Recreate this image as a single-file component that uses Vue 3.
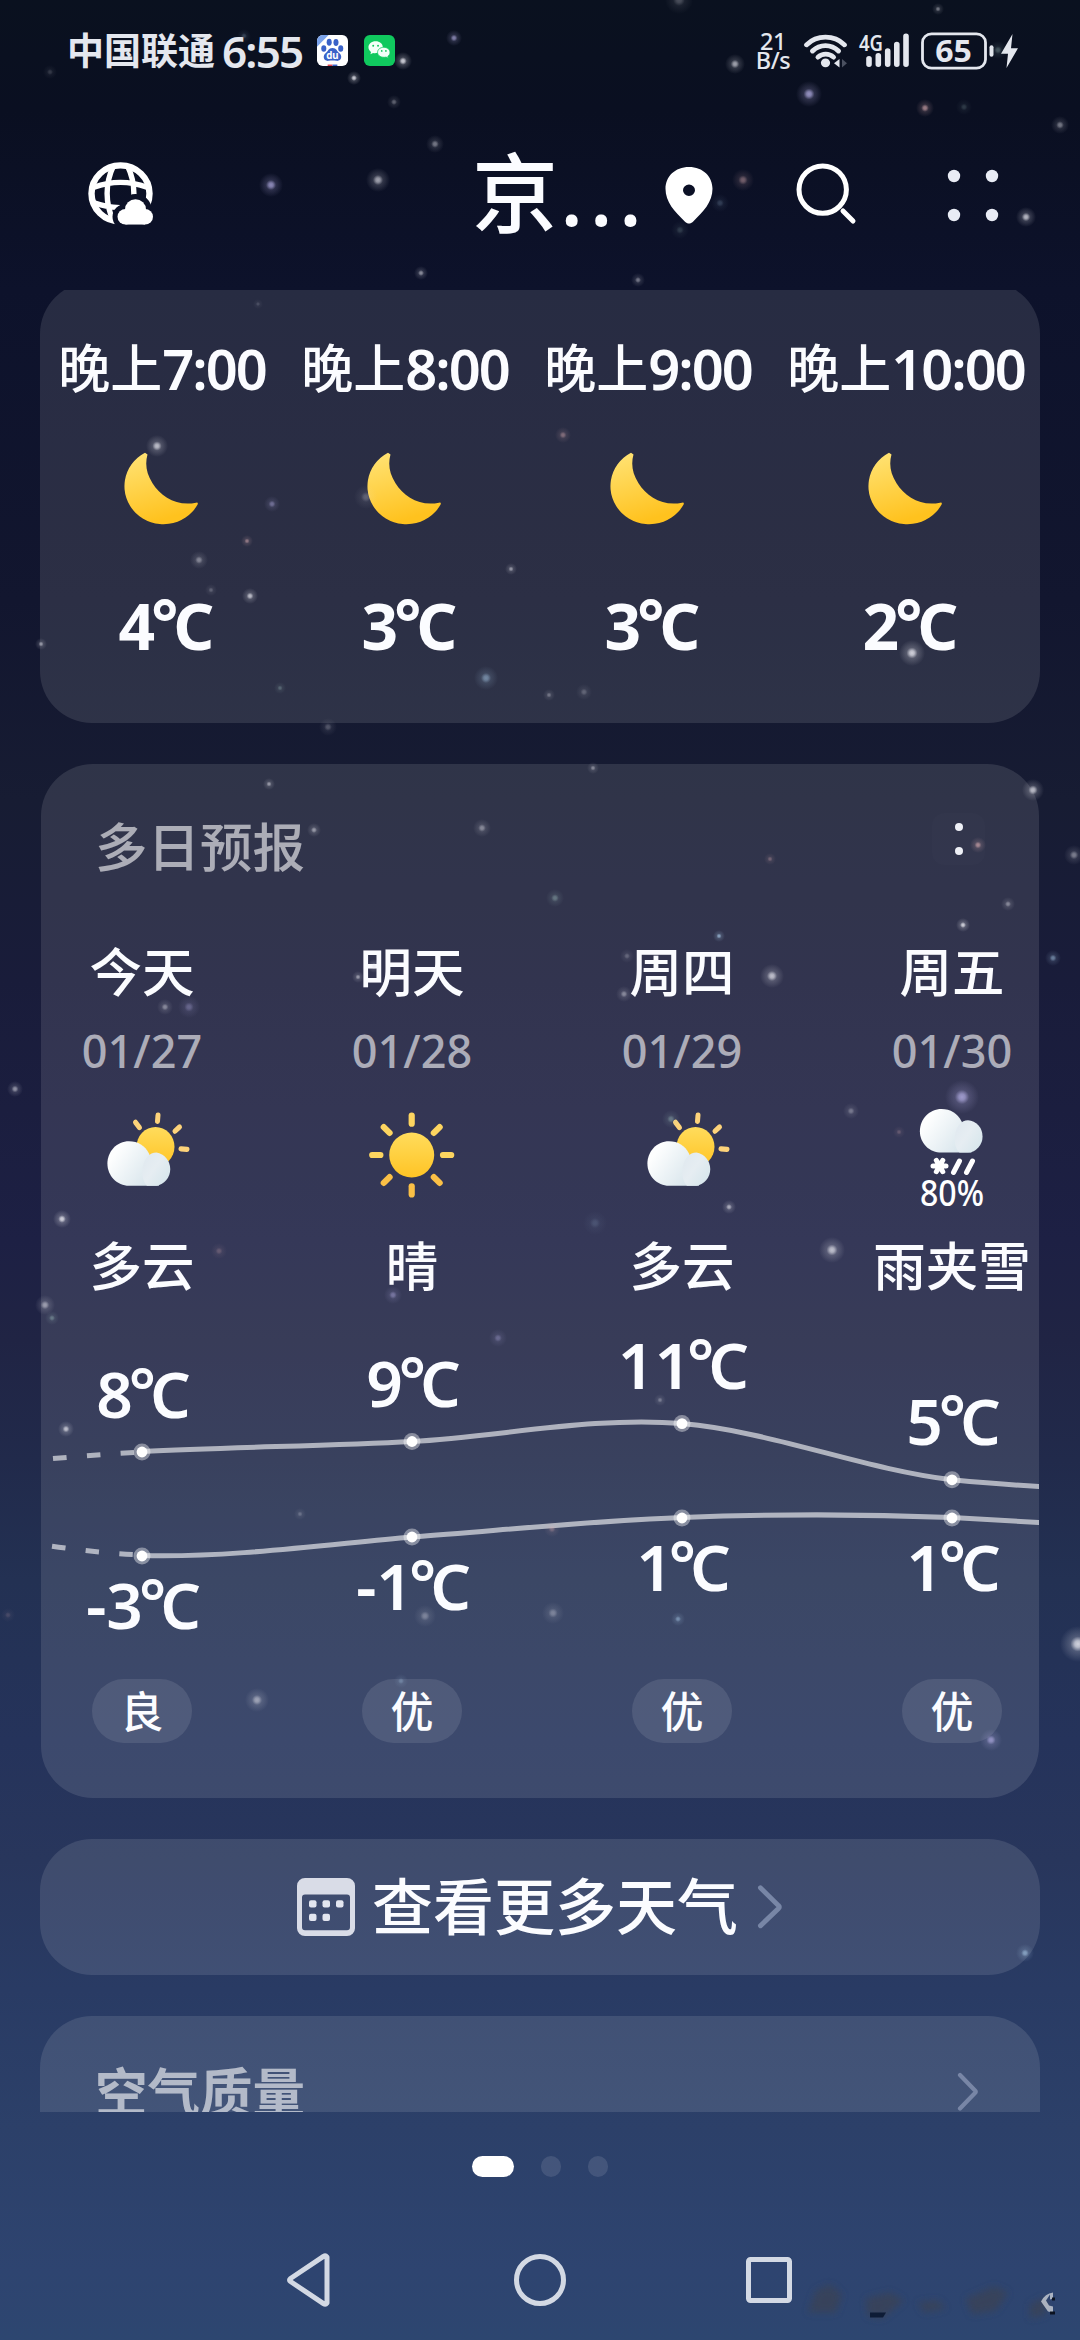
<script setup>
const hours = [
  { t: '7:00', v: '4' },
  { t: '8:00', v: '3' },
  { t: '9:00', v: '3' },
  { t: '10:00', v: '2' },
]

const days = [
  { name: '今天', date: '01/27', icon: 'partly', cond: '多云', air: '良', x: 142, hi: '8', hiY: 1452, lo: '-3', loY: 1556 },
  { name: '明天', date: '01/28', icon: 'sun', cond: '晴', air: '优', x: 412, hi: '9', hiY: 1441.5, lo: '-1', loY: 1537 },
  { name: '周四', date: '01/29', icon: 'partly', cond: '多云', air: '优', x: 682, hi: '11', hiY: 1423.6, lo: '1', loY: 1518 },
  { name: '周五', date: '01/30', icon: 'sleet', cond: '雨夹雪', air: '优', x: 952, hi: '5', hiY: 1479.8, lo: '1', loY: 1518 },
]

const rays = [0, 45, 90, 135, 180, 225, 270, 315]

// x, y, opacity, glow radius, tint
const stars = [
  [244, 36, 0.3, 7, 'b'], [50, 72, 0.2, 7, 'w'], [454, 38, 0.7, 8, 'p'], [403, 61, 0.9, 9, 'w'], [354, 78, 0.9, 7, 'w'],
  [394, 102, 0.4, 7, 'w'], [435, 144, 0.5, 9, 'w'], [271, 185, 0.75, 12, 'p'], [378, 180, 0.7, 12, 'w'], [421, 273, 0.6, 7, 'w'],
  [679, 0, 0.3, 14, 'w'], [938, 9, 0.5, 6, 'w'], [735, 64, 0.7, 10, 'w'], [809, 94, 0.8, 13, 'p'], [925, 108, 0.7, 9, 'r'],
  [964, 107, 0.25, 8, 'g'], [1060, 125, 0.5, 9, 'w'], [743, 180, 0.5, 11, 'r'], [720, 203, 0.25, 9, 'b'], [680, 230, 0.25, 9, 'g'],
  [1026, 217, 0.8, 10, 'w'], [638, 280, 0.5, 7, 'w'], [998, 50, 0.4, 9, 'g'], [258, 304, 0.2, 5, 'w'], [157, 446, 0.8, 11, 'w'],
  [272, 504, 0.5, 8, 'p'], [247, 541, 0.6, 6, 'r'], [199, 560, 0.5, 9, 'w'], [211, 590, 0.3, 6, 'w'], [250, 596, 0.8, 8, 'w'],
  [366, 497, 0.3, 12, 'w'], [511, 569, 0.6, 6, 'w'], [41, 644, 0.6, 6, 'w'], [280, 688, 0.4, 6, 'g'], [486, 678, 0.6, 12, 'b'],
  [328, 727, 0.3, 9, 'w'], [563, 435, 0.5, 8, 'r'], [549, 695, 0.4, 6, 'w'], [584, 692, 0.3, 8, 'w'], [912, 653, 0.9, 13, 'w'],
  [269, 784, 0.6, 6, 'w'], [314, 830, 0.6, 7, 'w'], [482, 828, 0.5, 9, 'w'], [165, 1007, 0.5, 8, 'w'], [189, 1007, 0.4, 11, 'p'],
  [358, 977, 0.6, 6, 'w'], [374, 966, 0.6, 7, 'w'], [15, 1089, 0.6, 8, 'w'], [62, 1219, 0.9, 9, 'w'], [219, 1251, 0.3, 8, 'r'],
  [393, 1295, 0.5, 9, 'p'], [593, 768, 0.5, 6, 'w'], [1033, 790, 0.8, 11, 'w'], [978, 845, 0.7, 8, 'r'], [1074, 855, 0.5, 10, 'w'],
  [770, 859, 0.4, 6, 'r'], [555, 898, 0.5, 9, 'g'], [1008, 904, 0.5, 7, 'w'], [963, 925, 0.9, 7, 'w'], [719, 936, 0.8, 6, 'b'],
  [1053, 958, 0.6, 8, 'b'], [627, 956, 0.3, 7, 'w'], [624, 994, 0.5, 8, 'w'], [772, 976, 0.8, 12, 'w'], [962, 1097, 0.8, 17, 'p'],
  [671, 1119, 0.5, 9, 'g'], [851, 1111, 0.4, 8, 'w'], [899, 1132, 0.3, 6, 'r'], [729, 1207, 0.7, 7, 'w'], [595, 1223, 0.2, 12, 'b'],
  [832, 1250, 0.8, 13, 'w'], [45, 1305, 0.6, 10, 'w'], [52, 1318, 0.5, 7, 'g'], [498, 1338, 0.4, 9, 'p'], [66, 1429, 0.8, 8, 'w'],
  [300, 1514, 0.3, 6, 'w'], [8, 1615, 0.2, 7, 'r'], [425, 1616, 0.4, 11, 'w'], [257, 1700, 0.6, 12, 'w'], [401, 1681, 0.4, 7, 'b'],
  [660, 1400, 0.4, 6, 'w'], [552, 1529, 0.4, 8, 'r'], [553, 1613, 0.4, 11, 'w'], [678, 1619, 0.6, 7, 'b'], [1078, 1644, 0.9, 18, 'w'],
  [991, 1740, 0.7, 11, 'p'], [1025, 1953, 0.7, 9, 'b'],
]
const tints = { w: '#e4e4ec', p: '#b9b3ea', b: '#a4c4e2', r: '#dfb0b4', g: '#9dbdbb' }
</script>

<template>
  <div class="screen">
    <header class="status">
      <span class="carrier">中国联通</span>
      <span class="clock">6:55</span>
      <svg class="app baidu" width="31" height="31" viewBox="0 0 32 32">
        <rect width="32" height="32" rx="6" fill="#fff" />
        <path d="M6 0H12L0 12V6a6 6 0 0 1 6-6z" fill="#7aa2ea" />
        <g fill="#3a62c8">
          <ellipse cx="12.6" cy="7.5" rx="2.6" ry="3.6" />
          <ellipse cx="19.6" cy="7.8" rx="2.6" ry="3.6" />
          <ellipse cx="7" cy="14" rx="2.6" ry="3.4" />
          <ellipse cx="24.5" cy="14" rx="2.6" ry="3.4" />
          <path d="M16 13.500c4.400 0 4.400 3.400 6.900 5.200 3.600 2.800 2.600 8.600-2.900 8-2.600-.4-5.400-.4-8 0-5.500.6-6.500-5.200-2.900-8 2.500-1.800 2.500-5.200 6.900-5.200z" />
        </g>
        <text x="15.900" y="25" text-anchor="middle" font-size="10" font-weight="700" fill="#fff">du</text>
        <path d="M11 30.500h5V32h-5z" fill="#e0404c" /><path d="M16 30.500h5V32h-5z" fill="#3a62c8" />
      </svg>
      <svg class="app" width="31" height="31" viewBox="0 0 32 32">
        <rect width="32" height="32" rx="6" fill="#10c95e" />
        <path d="M12 6.500c-4.300 0-7.400 2.800-7.400 6.200 0 2 1 3.600 2.700 4.800l-.7 2.400 2.800-1.400c3 .9 9.800-.5 10-6 0-3.300-3.200-6-7.400-6z" fill="#f4fff8" />
        <path d="M20.400 12.700c3.700 0 6.400 2.300 6.400 5.300 0 1.700-.8 3-2.200 4l.5 2-2.300-1.200c-4.600 1-8.800-1.300-8.800-4.800 0-3 2.700-5.300 6.400-5.300z" fill="#f4fff8" stroke="#10c95e" stroke-width=".8" />
        <g fill="#10c95e"><circle cx="9.500" cy="11" r="1" /><circle cx="14.500" cy="11" r="1" /><circle cx="18.300" cy="16.500" r=".9" /><circle cx="22.600" cy="16.500" r=".9" /></g>
      </svg>
      <div class="speed"><span>21</span><span>B/s</span></div>
      <svg class="wifi" width="46" height="36" viewBox="0 0 46 38" preserveAspectRatio="none">
        <g fill="none" stroke="#e4e7ee" stroke-width="5" stroke-linecap="round">
          <path d="M3.500 12.500C14 1.800 31 1.800 41.500 12.500" />
          <path d="M9.500 19C17 11.500 28 11.500 35.500 19" />
          <path d="M15 25.500c4.500-4.300 11-4.300 15.500 0" />
        </g>
        <circle cx="22.500" cy="31.500" r="4.600" fill="#e4e7ee" />
        <path d="M36.500 27.500v9l-5.500-4.500z" fill="#e4e7ee" />
        <path d="M39 27.500v9l5-4.500z" fill="#4a5060" />
      </svg>
      <svg class="cell" width="54" height="38" viewBox="0 0 54 40" preserveAspectRatio="none">
        <text x="1" y="20" font-size="23" font-weight="600" textLength="24" lengthAdjust="spacingAndGlyphs" fill="#e4e7ee">4G</text>
        <g stroke="#e4e7ee" stroke-width="5.600" stroke-linecap="round"><path d="M11 28v6M20.300 25v9M29.700 20v14M38.800 13v21M48 4.500V34" /></g>
      </svg>
      <svg class="batt" width="102" height="38" viewBox="0 0 102 40" preserveAspectRatio="none">
        <rect x="2.500" y="2" width="63" height="36" rx="9" fill="none" stroke="#e4e7ee" stroke-width="2.800" />
        <text x="33.500" y="31.500" text-anchor="middle" font-size="32" font-weight="700" fill="#e4e7ee">65</text>
        <rect x="69.500" y="14" width="4" height="12" rx="2" fill="#e4e7ee" />
        <path d="M92.500 2 81 23h7l-1.500 15L98 17h-7z" fill="#e4e7ee" />
      </svg>
    </header>

    <div class="topbar">
      <svg class="globe" width="66" height="64" viewBox="0 0 66 66" preserveAspectRatio="none">
        <defs>
          <mask id="cut">
            <rect width="66" height="66" fill="#fff" />
            <g fill="#000" stroke="#000" stroke-width="12"><circle cx="47.500" cy="49" r="10" /><circle cx="38" cy="56.500" r="7.500" /><circle cx="57" cy="56.500" r="7.500" /><rect x="38" y="52" width="20" height="12" /></g>
          </mask>
        </defs>
        <g fill="none" stroke="#fff" stroke-width="5.400" mask="url(#cut)">
          <circle cx="32.500" cy="32.500" r="29" stroke-width="6.400" />
          <path d="M25.500 4c-8.500 18-8.500 39 0 57M39.500 4c8.500 18 8.500 39 0 57M6 26c17-6.500 36-6.500 53 0M6 42c8 3 16 4.500 26 5" />
        </g>
        <g fill="#fff"><circle cx="47.500" cy="49" r="10.500" /><circle cx="37.500" cy="56.500" r="8" /><circle cx="57" cy="56.500" r="8" /><rect x="37.500" y="52" width="19.500" height="12.500" /></g>
      </svg>
      <div class="city"><span>京</span><span class="more">...</span></div>
      <svg class="pin" width="48" height="59" viewBox="0 0 48 62" preserveAspectRatio="none">
        <path fill="#fff" fill-rule="evenodd" d="M24 1C10 1 .5 11 .5 24c0 14 9 24 19.500 34.500 2.500 2.500 5.500 2.500 8 0C38.500 48 47.500 38 47.500 24 47.500 11 38 1 24 1zm0 18.500a6 6 0 1 1 0 12 6 6 0 0 1 0-12z" />
      </svg>
      <svg class="search" width="62" height="64" viewBox="0 0 62 64" fill="none" stroke="#fff" stroke-width="5" stroke-linecap="round">
        <circle cx="27.700" cy="28.600" r="23.700" /><path d="m48 50 10 10" />
      </svg>
      <svg class="dots" width="52" height="54" viewBox="0 0 52 54" fill="#e9ecf5">
        <circle cx="7" cy="7" r="6.200" /><circle cx="45" cy="7" r="6.200" /><circle cx="7" cy="46" r="6.200" /><circle cx="45" cy="46" r="6.200" />
      </svg>
    </div>

    <main class="scroll">
      <section class="card hourly">
        <div v-for="h in hours" :key="h.t" class="hour">
          <div class="time"><span>晚上</span><span class="num">{{ h.t }}</span></div>
          <svg class="moon" width="76" height="76" viewBox="-1 -1 76 78" preserveAspectRatio="none">
            <defs><linearGradient id="gold" x1="0" y1="0" x2=".3" y2="1"><stop offset="0" stop-color="#ffe478" /><stop offset="1" stop-color="#ffc21e" /></linearGradient></defs>
            <path d="M20 .8A39 39 0 1 0 72.600 54Q73.500 51.200 71 52C52 56 36 46 27.500 32 21 22 20 12 22.500 2.500 23 .2 20 .8z" fill="url(#gold)" />
          </svg>
          <div class="temp">{{ h.v }}<span class="deg">°</span>C</div>
        </div>
      </section>

      <section class="card daily">
        <div class="head">
          <h2>多日预报</h2>
          <div class="menu"><i></i><i></i></div>
        </div>
        <div class="cols">
          <div v-for="d in days" :key="d.date" class="day">
            <div class="name">{{ d.name }}</div>
            <div class="date">{{ d.date }}</div>
            <svg class="ico" width="100" height="100" viewBox="0 0 100 100">
              <defs>
                <linearGradient id="cl" x1="0" y1=".3" x2="1" y2=".9"><stop offset=".1" stop-color="#fdfefe" /><stop offset="1" stop-color="#d2e1e9" /></linearGradient>
                <linearGradient id="cl2" x1="0" y1="0" x2="1" y2=".8"><stop offset="0" stop-color="#dfe8ef" /><stop offset=".5" stop-color="#e6edf2" /><stop offset="1" stop-color="#d6e6ec" /></linearGradient>
                <linearGradient id="sunfill" x1="0" y1="0" x2="0" y2="1"><stop offset="0" stop-color="#ffdc5c" /><stop offset="1" stop-color="#ffc425" /></linearGradient>
              </defs>
              <g v-if="d.icon === 'sun'">
                <circle cx="49.700" cy="50" r="22.500" fill="url(#sunfill)" />
                <path v-for="r in rays" :key="r" d="M49.700 10.500v8.200" :transform="`rotate(${r} 49.700 50)`" :stroke="r > 90 && r < 270 ? '#fbc046' : '#fdd560'" stroke-width="6.200" stroke-linecap="round" />
              </g>
              <g v-if="d.icon === 'partly'" transform="translate(15 7.500) scale(1 1.037)">
                <circle cx="48.500" cy="33" r="19" fill="url(#sunfill)" />
                <path d="M51 2.500 50.500 8.500M28.500 9.500 32.500 14.500M72.500 14 68 18M74 35l6 .5" stroke="#fdd37a" stroke-width="5" stroke-linecap="round" fill="none" />
                <path d="M22 27.700C31 27.700 38 32 42 39.500L52 70.700H22C10 70.700.4 61 .4 49.200S10 27.700 22 27.700z" fill="url(#cl)" /><path d="M49.500 38.500a16.300 16.300 0 0 1 0 32.200H40C31 62 35 38.500 49.500 38.500z" fill="url(#cl2)" />
              </g>
              <g v-if="d.icon === 'sleet'">
                <g transform="translate(17.500 -24.500) scale(1 1.03)"><path d="M22 27.700C31 27.700 38 32 42 39.500L52 70H22C10 70 .4 61 .4 49.200S10 27.700 22 27.700z" fill="url(#cl)" /><path d="M48.500 38.500a15.800 15.800 0 0 1 0 31.500H40C31 62 35 38.500 48.500 38.500z" fill="url(#cl2)" /></g>
                <path d="M31 61h13M34.300 55.300l6.500 11.400M40.800 55.300l-6.500 11.400M57.500 56 51.500 67.500M70.500 56 64.500 67.500" stroke="#fff" stroke-width="5" stroke-linecap="round" />
                <text x="18" y="100.500" font-size="36" font-weight="500" textLength="64" lengthAdjust="spacingAndGlyphs" fill="#fff">80%</text>
              </g>
            </svg>
            <div class="cond">{{ d.cond }}</div>
          </div>
        </div>
        <svg class="chart" width="998" height="340" viewBox="41 1320 998 340">
          <g fill="none" stroke="#fff" stroke-opacity=".6" stroke-width="5">
            <path d="M53 1458.600Q98 1454.500 142 1452M52 1546.200Q98 1553 142 1555" stroke-dasharray="13.500 20.300" />
            <path d="M142 1451.500C230 1447 330 1446 412 1441.500 500 1436.500 595 1416 682 1423.600 772 1431.500 862 1469 952 1479.800 980 1482.500 1010 1485 1040 1486.500" />
            <path d="M142 1555.500C230 1558 330 1544 412 1537 500 1530.500 590 1521 682 1517.500 772 1514 862 1514 952 1517.500 980 1519 1010 1521 1040 1522.500" />
          </g>
          <g v-for="d in days" :key="d.x">
            <circle :cx="d.x" :cy="d.hiY" r="8.500" fill="#fff" fill-opacity=".4" /><circle :cx="d.x" :cy="d.hiY" r="5.400" fill="#fff" />
            <circle :cx="d.x" :cy="d.loY" r="8.500" fill="#fff" fill-opacity=".4" /><circle :cx="d.x" :cy="d.loY" r="5.400" fill="#fff" />
            <text class="deglabel" :x="d.x + 1.5" :y="d.hiY - 34.500" text-anchor="middle">{{ d.hi }}<tspan dx="-4" dy="-4">°</tspan><tspan dx="-6" dy="4">C</tspan></text>
            <text class="deglabel" :x="d.x + 1.5" :y="d.loY + 73" text-anchor="middle">{{ d.lo }}<tspan dx="-4" dy="-4">°</tspan><tspan dx="-6" dy="4">C</tspan></text>
          </g>
        </svg>
        <div class="cols airs">
          <div v-for="d in days" :key="d.date" class="air"><span>{{ d.air }}</span></div>
        </div>
      </section>

      <section class="card link">
        <svg width="58" height="58" viewBox="0 0 58 60" preserveAspectRatio="none">
          <path fill="#d9dce7" fill-rule="evenodd" d="M8 0h42a8 8 0 0 1 8 8v44a8 8 0 0 1-8 8H8a8 8 0 0 1-8-8V8a8 8 0 0 1 8-8zM8 17a3 3 0 0 0-3 3v31a3 3 0 0 0 3 3h42a3 3 0 0 0 3-3V20a3 3 0 0 0-3-3z" />
          <g fill="#e3e6f0"><rect x="12" y="23" width="7.500" height="7.500" rx="2" /><rect x="25.500" y="23" width="7.500" height="7.500" rx="2" /><rect x="39" y="23" width="7.500" height="7.500" rx="2" /><rect x="12" y="37" width="7.500" height="7.500" rx="2" /><rect x="25.500" y="37" width="7.500" height="7.500" rx="2" /></g>
        </svg>
        <span>查看更多天气</span>
        <svg class="chev" width="26" height="46" viewBox="0 0 26 48" preserveAspectRatio="none" fill="none" stroke="#7886a6" stroke-width="5" stroke-linecap="round" stroke-linejoin="round"><path d="m3.500 4 18 18.500q1.600 1.500 0 3L3.500 43.500" /></svg>
      </section>

      <section class="card air-card">
        <h2>空气质量</h2>
        <svg width="22" height="40" viewBox="0 0 22 40" fill="none" stroke="#7886a6" stroke-width="4.200" stroke-linecap="round" stroke-linejoin="round"><path d="m3 3 15 15.500q1.300 1.300 0 2.600L3 36.500" /></svg>
      </section>
    </main>

    <div class="pager"><i class="on"></i><i></i><i></i></div>

    <nav class="nav">
      <svg width="46" height="54" viewBox="0 0 46 54"><path d="M41 4v46q-1.500 2-3.500.6L4.500 28.500q-2-1.500 0-3L37.500 3.400q2-1.200 3.500.6z" /></svg>
      <svg width="54" height="54" viewBox="0 0 54 54"><circle cx="27" cy="27" r="23.500" /></svg>
      <svg width="48" height="50" viewBox="0 0 48 50"><rect x="3.500" y="4.500" width="41" height="41" rx="2" /></svg>
    </nav>

    <svg class="sky" width="1080" height="2340" viewBox="0 0 1080 2340">
      <defs>
        <radialGradient v-for="(c, k) in tints" :id="'star-' + k" :key="k">
          <stop offset="0" :stop-color="c" /><stop offset=".18" :stop-color="c" stop-opacity=".85" /><stop offset=".42" :stop-color="c" stop-opacity=".25" /><stop offset="1" :stop-color="c" stop-opacity="0" />
        </radialGradient>
        <filter id="soft" x="-20%" y="-50%" width="140%" height="200%"><feGaussianBlur stdDeviation="3.500" /></filter>
      </defs>
      <circle v-for="(s, i) in stars" :key="i" :cx="s[0]" :cy="s[1]" :r="s[3]" :opacity="s[2]" :fill="`url(#star-${s[4]})`" />
      <g transform="translate(0 -15.500)">
        <g filter="url(#soft)" opacity=".75">
          <path d="M808 2328l8-22 14-6 12 10-6 18zM866 2314l24-6 14 8-22 18-14-2zM918 2318l20-2 8 8-22 4zM966 2314l28-12 14 6-12 18-24 4zM1030 2320l16-8v18l-16 4z" fill="#3b4254" />
        </g>
        <path d="M870 2328h16l-3 5h-13z" fill="#0e1c36" />
        <path d="M1053 2308v6l-3 1v-5l-4 6 3 5 4 1v6l-5-1-7-10q4-8 12-9z" fill="#c9ced6" opacity=".8" />
        <path d="M1052 2313h3v3h-3zM1050 2327h5v3h-5z" fill="#0b1220" />
      </g>
    </svg>
  </div>
</template>

<style>
body {
  background: #091020;
}
</style>

<style scoped>
.screen {
  position: relative;
  width: 1080px;
  height: 2340px;
  overflow: hidden;
  display: flex;
  flex-direction: column;
  color: #fbfcff;
  font-family: 'Noto Sans', 'Noto Sans CJK SC', sans-serif;
  font-weight: 500;
  background: linear-gradient(180deg, #0a111f 0, #0a0f21 110px, #0d122b 290px, #12162f 600px, #171c33 800px, #191c3a 980px, #1d2044 1240px, #202444 1340px, #212a4b 1460px, #233153 1580px, #25335b 1740px, #28365c 1860px, #293b64 1990px, #2c4069 2130px, #2e4470 2270px, #2d4670 2340px);
}
.sky {
  position: absolute;
  inset: 0;
  pointer-events: none;
}
.status {
  height: 101px;
  box-sizing: border-box;
  padding: 0 58px 0 67px;
  display: flex;
  align-items: center;
  color: #e4e7ee;
}
.status svg,
.ico {
  overflow: visible;
}
.carrier {
  font-size: 37px;
  line-height: 60px;
  font-weight: 700;
}
.clock {
  width: 82px;
  margin-left: 7px;
  font-size: 44px;
  line-height: 60px;
  font-weight: 600;
  letter-spacing: -1.8px;
}
.app {
  margin-left: 16px;
}
.baidu {
  margin-left: 13px;
}
.speed {
  width: 34px;
  margin-left: auto;
  display: flex;
  flex-direction: column;
  align-items: center;
  font-size: 23.5px;
  line-height: 19px;
  font-weight: 500;
  letter-spacing: -0.5px;
}
.wifi {
  margin-left: 13px;
}
.cell {
  margin-left: 9px;
}
.batt {
  margin-left: 8px;
}
.topbar {
  height: 189px;
  flex: none;
  display: flex;
  align-items: flex-start;
}
.globe {
  margin: 61px 0 0 88px;
}
.city {
  display: flex;
  margin: 34px 0 0 318px;
  width: 180px;
  font-size: 86px;
  line-height: 116px;
}
.more {
  letter-spacing: 6px;
  margin-left: 2px;
}
.pin {
  margin: 65px 0 0 12.5px;
}
.search {
  margin: 60px 0 0 82px;
}
.dots {
  margin: 68px 0 0 90px;
}
.scroll {
  height: 1822px;
  flex: none;
  overflow: hidden;
  display: flex;
  flex-direction: column;
  align-items: center;
}
.card {
  width: 1000px;
  flex: none;
  box-sizing: border-box;
  border-radius: 52px;
  background: rgba(255, 255, 255, 0.11);
}
.hourly {
  height: 441px;
  margin-top: -8px;
  padding: 54px 0 0 14px;
  display: grid;
  grid-template-columns: 216px 216px 216px 246px;
  column-gap: 27px;
}
.hour {
  display: flex;
  flex-direction: column;
  align-items: center;
}
.time {
  height: 64px;
  line-height: 64px;
  display: flex;
  justify-content: center;
  font-size: 52px;
  white-space: nowrap;
}
.num {
  font-size: 56px;
  font-weight: 600;
  letter-spacing: -2px;
}
.moon {
  margin-top: 51px;
}
.temp {
  height: 80px;
  margin: 59px 0 0 9px;
  font-size: 64px;
  line-height: 80px;
  font-weight: 700;
  white-space: nowrap;
}
.deg {
  display: inline-block;
  line-height: 40px;
  vertical-align: 4px;
  margin: 0 -5px 0 -4px;
}
.daily {
  width: 998px;
  height: 1034px;
  margin-top: 41px;
  padding-top: 33px;
  overflow: hidden;
}
.head {
  height: 100px;
  padding: 0 54px 0 54px;
  display: flex;
  justify-content: space-between;
  align-items: center;
}
h2 {
  margin: 0;
  font-size: 52.5px;
  line-height: 76px;
  font-weight: 500;
  color: rgba(255, 255, 255, 0.6);
}
.menu {
  width: 53px;
  height: 52px;
  margin-bottom: 17px;
  border-radius: 12px;
  background: rgba(255, 255, 255, 0.012);
  display: flex;
  flex-direction: column;
  align-items: center;
  justify-content: center;
  gap: 16px;
}
.menu i {
  width: 8px;
  height: 8px;
  border-radius: 50%;
  background: #eef0f6;
}
.cols {
  width: 1080px;
  margin: 45px 0 0 -34px;
  display: grid;
  grid-template-columns: repeat(4, 270px);
}
.day {
  display: flex;
  flex-direction: column;
  align-items: center;
  white-space: nowrap;
}
.name,
.cond {
  font-size: 52.5px;
  height: 60px;
  line-height: 60px;
}
.date {
  height: 44px;
  margin-top: 27px;
  line-height: 44px;
  font-size: 45px;
  color: rgba(255, 255, 255, 0.6);
}
.ico {
  margin-top: 32px;
}
.cond {
  margin-top: 31px;
}
.chart {
  display: block;
  margin-top: 24px;
}
.deglabel {
  font-size: 64px;
  font-weight: 600;
  fill: #fbfcff;
}
.airs {
  margin-top: 19px;
}
.air {
  display: flex;
  justify-content: center;
}
.air span {
  width: 100px;
  height: 64px;
  border-radius: 32px;
  background: rgba(255, 255, 255, 0.1);
  font-size: 43px;
  line-height: 65px;
  text-align: center;
}
.link {
  height: 136px;
  margin-top: 41px;
  display: flex;
  align-items: center;
  padding-left: 257px;
  font-size: 61px;
  line-height: 80px;
  white-space: nowrap;
}
.link span {
  margin-left: 17px;
}
.chev {
  margin-left: 19px;
}
.air-card {
  height: 400px;
  margin-top: 41px;
  padding: 38px 61px 0 55px;
  display: flex;
  justify-content: space-between;
  align-items: flex-start;
}
.air-card h2 {
  font-weight: 700;
}
.air-card svg {
  margin-top: 18px;
}
.pager {
  margin-top: 44px;
  padding-left: 472px;
  display: flex;
  gap: 26.5px;
}
.pager i {
  width: 20.5px;
  height: 20.5px;
  border-radius: 11px;
  background: rgba(255, 255, 255, 0.11);
}
.pager .on {
  width: 42px;
  background: #fff;
}
.nav {
  margin-top: 76px;
  padding-left: 286px;
  display: flex;
  align-items: center;
}
.nav svg {
  fill: none;
  stroke: #d3d9e4;
  stroke-width: 5;
  stroke-linejoin: round;
}
.nav svg:nth-child(2) {
  margin: 0 178px 0 181px;
}
</style>
